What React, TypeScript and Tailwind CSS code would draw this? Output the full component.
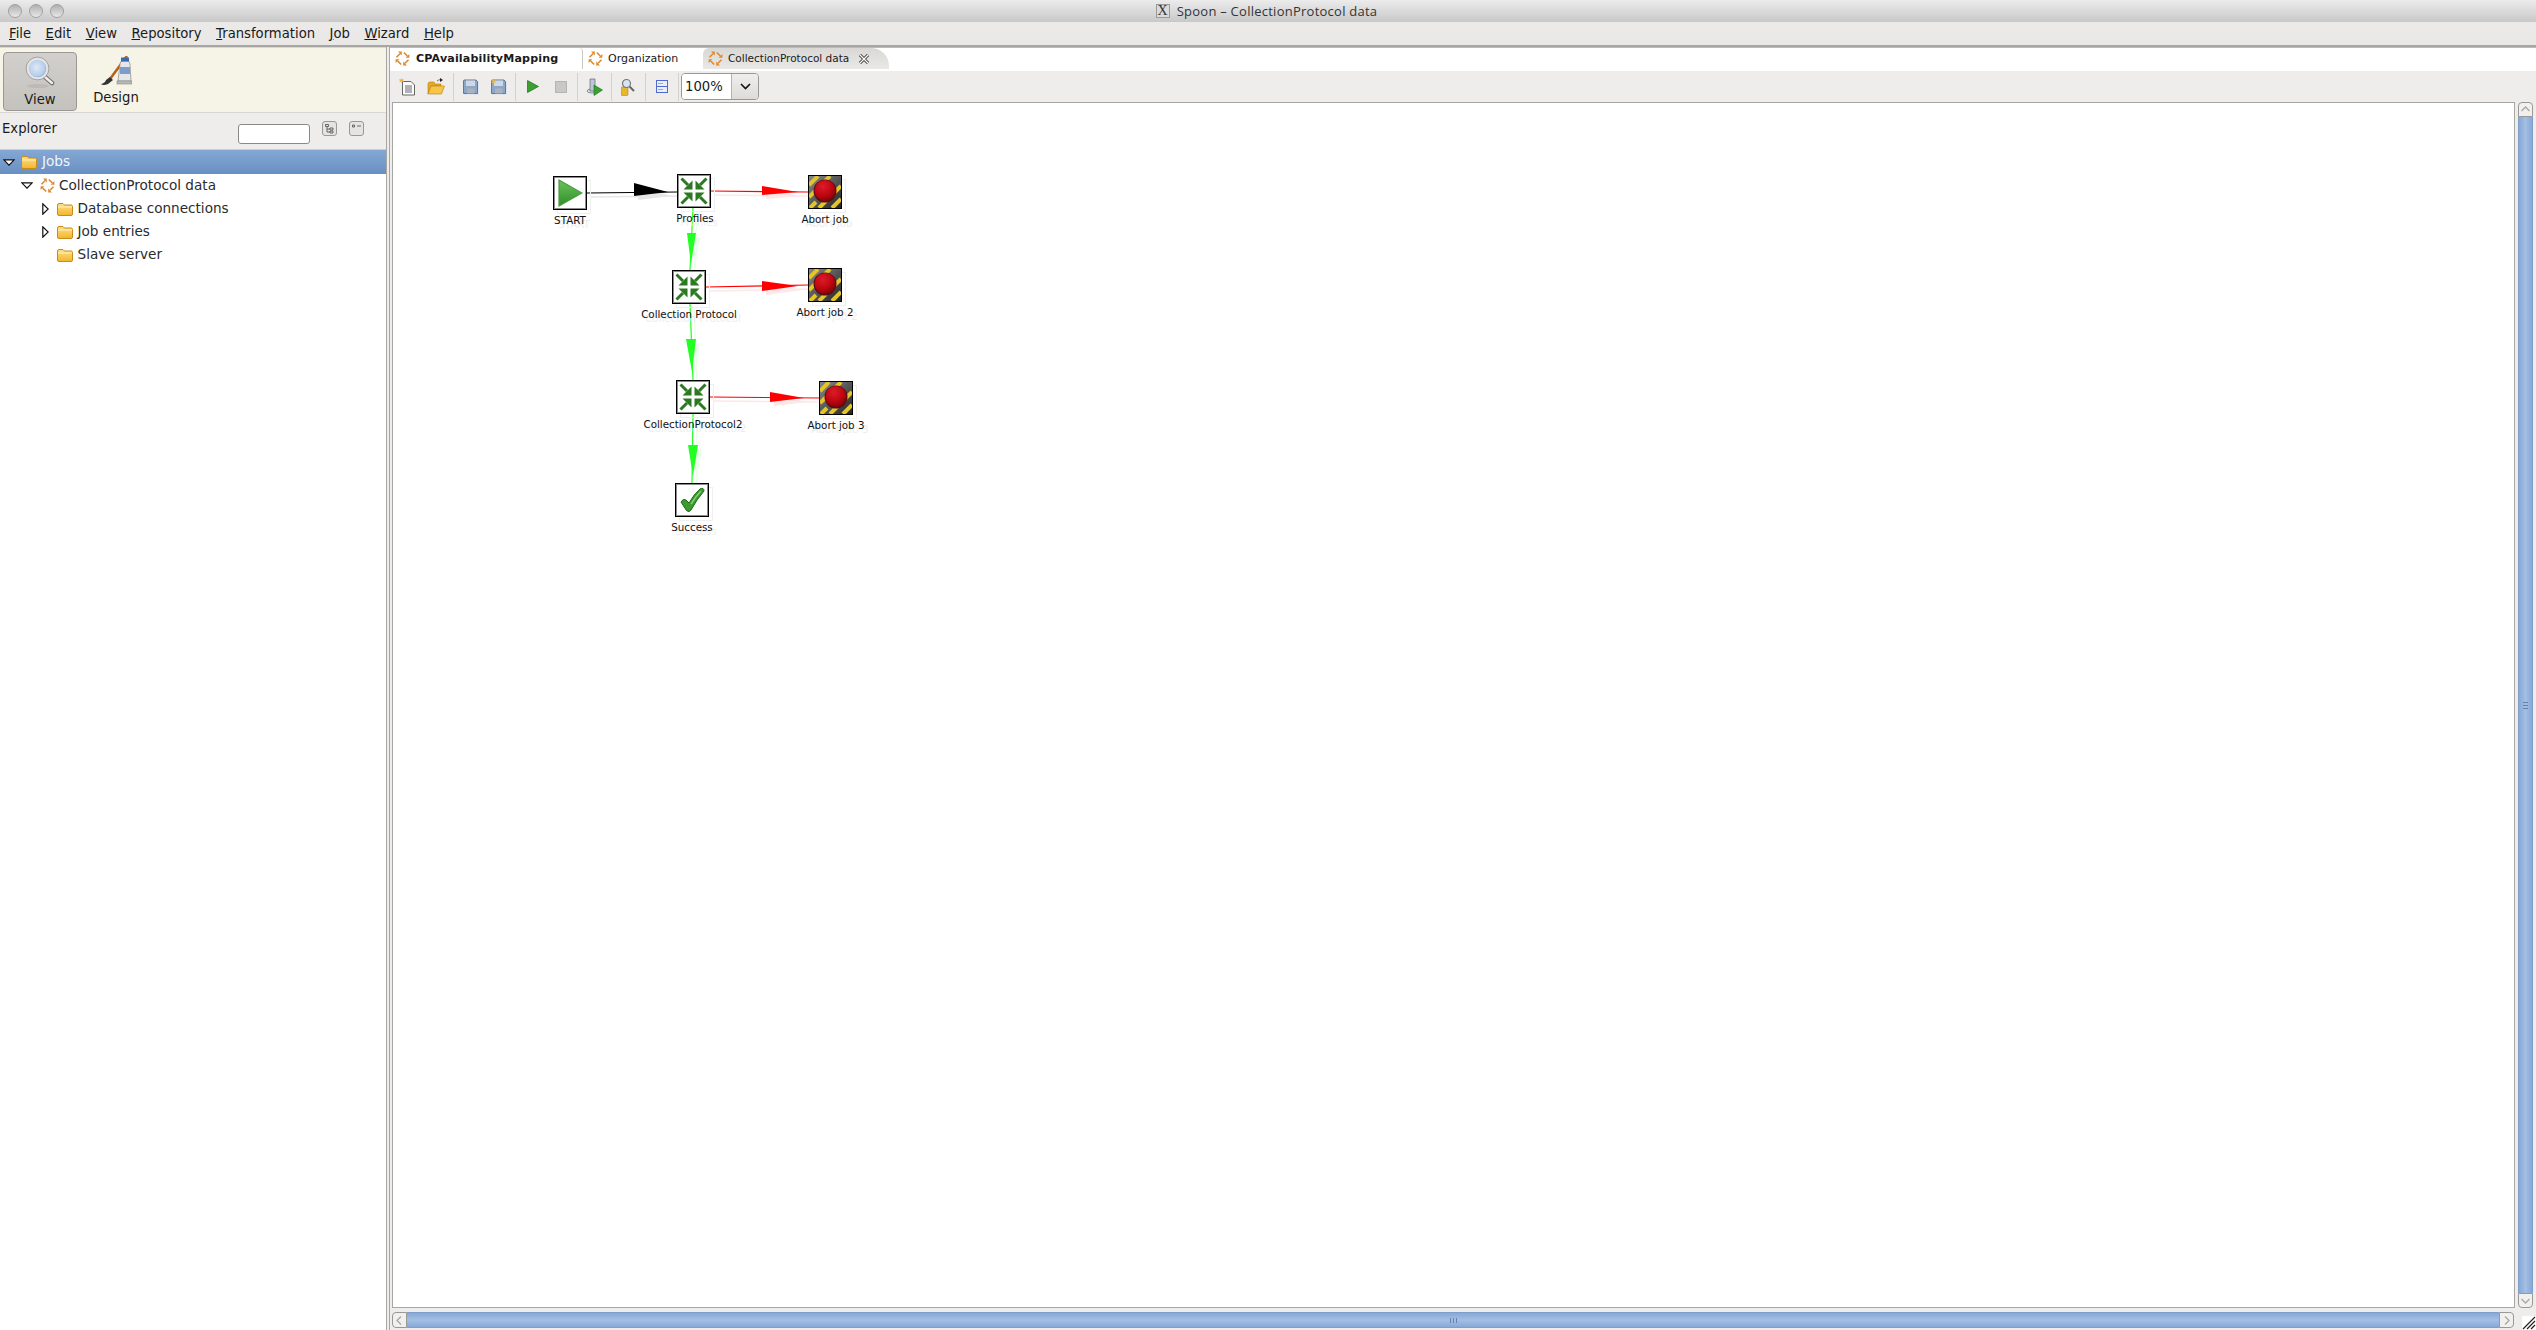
import React from "react";

const Job = ({ className = "" }: { className?: string }) => (
  <svg width="15" height="15" viewBox="0 0 15 15" className={`shrink-0 ${className}`}>
    <g stroke="#dc8a2c" strokeWidth="1.6" fill="none">
      <path d="M1.5 6.2 L5 2.7" />
      <path d="M8.8 1.5 L12.3 5" />
      <path d="M13.5 8.8 L10 12.3" />
      <path d="M6.2 13.5 L2.7 10" />
    </g>
    <g fill="#dc8a2c">
      <path d="M3 .6 H6.8 V4.4 Z" />
      <path d="M14.4 3 V6.8 H10.6 Z" />
      <path d="M12 14.4 H8.2 V10.6 Z" />
      <path d="M.6 12 V8.2 H4.4 Z" />
    </g>
  </svg>
);

const Folder = () => (
  <svg width="16" height="14" viewBox="0 0 16 14" className="shrink-0">
    <defs>
      <linearGradient id="fold" x1="0" y1="0" x2="0" y2="1">
        <stop offset="0" stopColor="#fde08a" />
        <stop offset="1" stopColor="#f3b52c" />
      </linearGradient>
    </defs>
    <path d="M.5 3 Q.5 1.5 2 1.5 H6 L7.5 3 H14 Q15.5 3 15.5 4.5 V12 Q15.5 13.5 14 13.5 H2 Q.5 13.5 .5 12 Z" fill="url(#fold)" stroke="#c98c1a" />
    <path d="M1 5 H15" stroke="#fff2c0" />
  </svg>
);

const TriDown = () => (
  <svg width="12" height="7" viewBox="0 0 12 7">
    <path d="M.8.8 H11.2 L6 6.2 Z" fill="#fff" stroke="#111" strokeWidth="1.2" />
  </svg>
);
const TriRight = () => (
  <svg width="7" height="12" viewBox="0 0 7 12">
    <path d="M.8.8 V11.2 L6.2 6 Z" fill="#fff" stroke="#111" strokeWidth="1.2" />
  </svg>
);

const Magnifier = () => (
  <svg width="30" height="33" viewBox="0 0 30 33">
    <defs>
      <radialGradient id="lens" cx=".45" cy=".45" r=".6">
        <stop offset="0" stopColor="#dfe9f6" />
        <stop offset=".7" stopColor="#b5cdea" />
        <stop offset="1" stopColor="#5d8fd0" />
      </radialGradient>
    </defs>
    <ellipse cx="13" cy="30" rx="11" ry="2" fill="#bcbab5" />
    <path d="M20 21 L27 27" stroke="#6f6f6f" strokeWidth="4.5" strokeLinecap="round" />
    <path d="M20 21 L27 27" stroke="#eeeeee" strokeWidth="2.4" strokeLinecap="round" />
    <circle cx="12.5" cy="12.5" r="10" fill="url(#lens)" stroke="#e4e4e4" strokeWidth="2.4" />
    <circle cx="12.5" cy="12.5" r="11.4" fill="none" stroke="#8a8a8a" strokeWidth=".7" />
  </svg>
);

const DesignIcon = () => (
  <svg width="32" height="30" viewBox="0 0 32 30">
    <path d="M27 0 L10 23" stroke="#b3651e" strokeWidth="2.6" />
    <path d="M10 21 L13 24 L8 28 Q3 30 1 28 Q5 27 6 24 Z" fill="#333" />
    <path d="M20 8 Q20 5 23 5 H27 Q30 5 30 8 L31 25 H18 Z" fill="#e4e6e8" stroke="#8a8a8a" strokeWidth=".7" />
    <rect x="21" y="1.5" width="8" height="4" fill="#3c68b0" />
    <rect x="20" y="11" width="10" height="7" fill="#7d9ccb" />
    <rect x="17" y="25" width="15" height="3" fill="#bbb" stroke="#777" strokeWidth=".5" />
  </svg>
);

const SmallBtn = ({ kind }: { kind: number }) => (
  <div className="w-[15px] h-[15px] rounded-[3px] border border-[#9a9895] bg-[#e6e4e1] flex items-center justify-center">
    <svg width="11" height="11" viewBox="0 0 11 11" fill="none" stroke="#666">
      {kind === 0 ? (
        <path d="M1.5 1.5 h3 v2 h-3 z M3 3.5 V9 H6 M3 6 H6 M6 5 h3 v2 h-3 z M6 8 h3 v2 h-3 z" />
      ) : (
        <path d="M1.5 2 h2 v2 h-2 z M6 3 H10" />
      )}
    </svg>
  </div>
);

const rows = [
  { indent: 21, arrow: "down", icon: "job", text: "CollectionProtocol data" },
  { indent: 42, arrow: "right", icon: "folder", text: "Database connections" },
  { indent: 42, arrow: "right", icon: "folder", text: "Job entries" },
  { indent: 42, arrow: "none", icon: "folder", text: "Slave server" },
];

const menu: [string, string][] = [
  ["F", "ile"],
  ["E", "dit"],
  ["V", "iew"],
  ["R", "epository"],
  ["T", "ransformation"],
  ["J", "ob"],
  ["W", "izard"],
  ["H", "elp"],
];

const Sep = ({ className = "" }: { className?: string }) => (
  <div className={`w-px h-[28px] bg-[#d3d1ce] ${className}`} />
);

const Cell = ({ w, children }: { w: string; children: React.ReactNode }) => (
  <div className={`${w} h-[28px] flex items-center justify-center shrink-0`}>{children}</div>
);

const NewIcon = () => (
  <svg width="18" height="18" viewBox="0 0 18 18">
    <path d="M3.5 3.5 H12 L15.5 7 V17 H3.5 Z" fill="#fbfbfb" stroke="#666" />
    <path d="M6 8 H13 M6 10 H13 M6 12 H13 M6 14 H13" stroke="#667" />
    <path d="M2.5 0 L3.3 1.5 L5 1 L4 2.5 L5 4 L3.3 3.6 L2.5 5 L1.7 3.6 L0 4 L1 2.5 L0 1 L1.7 1.5 Z" fill="#f2b632" />
  </svg>
);
const OpenIcon = () => (
  <svg width="18" height="17" viewBox="0 0 18 17">
    <path d="M1 6 Q1 4 3 4 H7 L8 6 H14 V8 H4 L1 16 Z" fill="#e8a824" stroke="#b57f17" strokeWidth=".6" />
    <path d="M1 16 L4 8 H17.5 L14.5 16 Z" fill="#f6c546" stroke="#b57f17" strokeWidth=".6" />
    <path d="M10 3 Q12 1 14 2" stroke="#777" fill="none" />
    <path d="M13 0 L16 2 L13 4 Z" fill="#222" />
  </svg>
);
const SaveIcon = ({ star }: { star?: boolean }) => (
  <svg width="16" height="16" viewBox="0 0 16 16">
    <rect x="1" y="2" width="15" height="14" fill="#dfe5ee" />
    <path d="M.5 2 Q.5 1 1.5 1 H13 L14.5 2.5 V14.5 H.5 Z" fill="#8fa7c6" stroke="#67788f" />
    <rect x="3" y="1.5" width="9" height="5.5" fill="#cfd9e6" />
    <rect x="4" y="9.5" width="7.5" height="5" fill="#aab2bd" />
    {star && <path d="M2.5 0 L3.3 1.5 L5 1 L4 2.5 L5 4 L3.3 3.6 L2.5 5 L1.7 3.6 L0 4 L1 2.5 L0 1 L1.7 1.5 Z" fill="#f2b632" />}
  </svg>
);
const RunIcon = ({ size = 12 }: { size?: number }) => (
  <svg width={size} height={size + 1} viewBox="0 0 12 13">
    <path d="M.5.5 L11.5 6.5 L.5 12.5 Z" fill="#3aa02f" stroke="#1d6b1a" strokeWidth=".7" />
  </svg>
);
const StopIcon = () => <div className="w-[12px] h-[12px] bg-[#c9c8c5] border border-[#b5b4b1]" />;
const RunOptIcon = () => (
  <svg width="17" height="19" viewBox="0 0 17 19">
    <ellipse cx="6" cy="14" rx="5" ry="2" fill="#d5dbe4" stroke="#667" strokeWidth=".7" />
    <path d="M4 2 H9 V14 H4 Z" fill="#bcc6d6" stroke="#667" strokeWidth=".7" />
    <path d="M8 8 L16.5 13 L8 18.5 Z" fill="#3aa02f" stroke="#1d6b1a" strokeWidth=".6" />
  </svg>
);
const FindIcon = () => (
  <svg width="14" height="18" viewBox="0 0 14 18">
    <rect x="0" y="9" width="7" height="8.5" rx="1" fill="#e6b62c" stroke="#a97f12" strokeWidth=".5" />
    <path d="M8 8 L13 13" stroke="#666" strokeWidth="2" />
    <circle cx="5.5" cy="5.5" r="4" fill="#d6e4f3" stroke="#777" strokeWidth="1.2" />
  </svg>
);
const LayersIcon = () => (
  <svg width="12" height="13" viewBox="0 0 12 13">
    <rect x=".5" y=".5" width="11" height="12" fill="#e9eefa" stroke="#4d6bd0" />
    <path d="M0 6.5 H12" stroke="#4d6bd0" />
    <path d="M2 3.5 H7 M2 9.5 H7" stroke="#d9a93a" />
  </svg>
);

const ChevronThin = ({ d }: { d: string }) => (
  <svg width="11" height="11" viewBox="0 0 11 11" fill="none" stroke="#a9a7a4" strokeWidth="1.3">
    <path d={d} />
  </svg>
);

const OX = 393;
const OY = 103;

const Merge = () => (
  <svg width="28" height="28" viewBox="0 0 28 28">
    <g stroke="#2b7a22" strokeWidth="3" fill="none">
      <path d="M1.5 1.5 L8 8" />
      <path d="M26.5 1.5 L20 8" />
      <path d="M1.5 26.5 L8 20" />
      <path d="M26.5 26.5 L20 20" />
    </g>
    <g fill="#2b7a22">
      <path d="M12.5 12.5 V3.5 L3.5 12.5 Z" />
      <path d="M15.5 12.5 V3.5 L24.5 12.5 Z" />
      <path d="M12.5 15.5 V24.5 L3.5 15.5 Z" />
      <path d="M15.5 15.5 V24.5 L24.5 15.5 Z" />
    </g>
  </svg>
);

const Start = () => (
  <svg width="26" height="28" viewBox="0 0 26 28">
    <defs>
      <linearGradient id="startg" x1="0" y1="0" x2="0" y2="1">
        <stop offset="0" stopColor="#6cc25c" />
        <stop offset="1" stopColor="#2f8f28" />
      </linearGradient>
    </defs>
    <path d="M2 1 L25 14 L2 27 Z" fill="url(#startg)" stroke="#4c9a42" strokeWidth="1.2" />
  </svg>
);

const Check = () => (
  <svg width="26" height="26" viewBox="0 0 26 26">
    <path d="M2 15 Q4 11 7 13 L10 16 Q15 7 21 2 Q25 0 25 4 Q18 12 12 23 Q10 26 7.5 23.5 Z" fill="#3c9a2e" stroke="#1f6a1a" strokeWidth="1" />
    <path d="M12 17 Q17 9 22 4" stroke="#7fd06c" strokeWidth="1.6" fill="none" />
  </svg>
);

const Abort = () => (
  <svg width="34" height="34" viewBox="0 0 34 34" className="block">
    <defs>
      <radialGradient id="red" cx=".4" cy=".3" r=".75">
        <stop offset="0" stopColor="#dc1c28" />
        <stop offset=".6" stopColor="#bd0610" />
        <stop offset="1" stopColor="#7c0308" />
      </radialGradient>
      <linearGradient id="plate" x1="0" y1="0" x2="1" y2="1">
        <stop offset="0" stopColor="#8a8a8a" />
        <stop offset="1" stopColor="#222" />
      </linearGradient>
    </defs>
    <rect width="34" height="34" fill="url(#plate)" />
    <g stroke="#e2c52a" strokeWidth="4">
      <path d="M1 10 L10 1" />
      <path d="M1 22 L22 1" />
      <path d="M24 33 L33 24" />
      <path d="M11 33 L33 11" />
      <path d="M2 33 L8 27" />
    </g>
    <rect x=".5" y=".5" width="33" height="33" fill="none" stroke="#000" />
    <circle cx="17" cy="16" r="11.5" fill="#5b0d10" />
    <circle cx="17" cy="15.5" r="10.5" fill="url(#red)" />
  </svg>
);

type N = { x: number; y: number; cx: number; ly: number; label: string; kind: string };
const nodes: N[] = [
  { x: 553, y: 176, cx: 570, ly: 220, label: "START", kind: "start" },
  { x: 677, y: 174, cx: 695, ly: 218, label: "Profiles", kind: "merge" },
  { x: 808, y: 175, cx: 825, ly: 219, label: "Abort job", kind: "abort" },
  { x: 672, y: 270, cx: 689, ly: 314, label: "Collection Protocol", kind: "merge" },
  { x: 808, y: 268, cx: 825, ly: 312, label: "Abort job 2", kind: "abort" },
  { x: 676, y: 380, cx: 693, ly: 424, label: "CollectionProtocol2", kind: "merge" },
  { x: 819, y: 381, cx: 836, ly: 425, label: "Abort job 3", kind: "abort" },
  { x: 675, y: 483, cx: 692, ly: 527, label: "Success", kind: "check" },
];

type E = { a: [number, number]; b: [number, number]; tri: string; c: string };
const edges: E[] = [
  { a: [587, 193], b: [677, 192], tri: "634,183 634,196 668,192", c: "#000000" },
  { a: [711, 191], b: [808, 192], tri: "762,186 762,195 798,192", c: "#ff0000" },
  { a: [706, 287], b: [808, 285], tri: "762,281 762,291 798,286", c: "#ff0000" },
  { a: [710, 397], b: [819, 398], tri: "770,392 770,402 804,398", c: "#ff0000" },
  { a: [693, 208], b: [690, 270], tri: "687,233 696,233 691,264", c: "#22ff22" },
  { a: [690, 304], b: [693, 380], tri: "686,339 696,339 692,372", c: "#22ff22" },
  { a: [693, 414], b: [692, 483], tri: "688,445 698,445 693,476", c: "#22ff22" },
];

function NodeView({ n }: { n: N }) {
  return (
    <>
      <div
        className="absolute w-[34px] h-[34px] border border-[#efefef]"
        style={{ left: n.x - OX + 4, top: n.y - OY + 4 }}
      />
      <div
        className="absolute -translate-x-1/2 -translate-y-1/2 whitespace-nowrap text-[10.3px] leading-none text-[#ededed]"
        style={{ left: n.cx - OX + 4, top: n.ly - OY + 4 }}
      >
        {n.label}
      </div>
      <div
        className={`absolute w-[34px] h-[34px] flex items-center justify-center ${n.kind === "abort" ? "" : "bg-white border border-black shadow-[inset_0_0_0_1px_rgba(0,0,0,0.45)]"}`}
        style={{ left: n.x - OX, top: n.y - OY }}
      >
        {n.kind === "merge" && <Merge />}
        {n.kind === "start" && <Start />}
        {n.kind === "abort" && <Abort />}
        {n.kind === "check" && <Check />}
      </div>
      <div
        className="absolute -translate-x-1/2 -translate-y-1/2 whitespace-nowrap text-[10.3px] leading-none text-[#111]"
        style={{ left: n.cx - OX, top: n.ly - OY }}
      >
        {n.label}
      </div>
    </>
  );
}

export default function App() {
  return (
    <div className="w-[2536px] h-[1330px] overflow-hidden flex flex-col bg-[#eeedeb] text-[#1a1a1a] font-['DejaVu_Sans',sans-serif]">
      {/* title bar */}
      <div className="relative h-[22px] shrink-0 flex items-center justify-center bg-gradient-to-b from-[#ececec] to-[#c8c8c8]">
        <div className="absolute left-[8px] top-[4px] flex gap-[7px]">
          {[0, 1, 2].map((i) => (
            <div key={i} className="w-[14px] h-[14px] rounded-full border border-[#a0a0a0] bg-gradient-to-b from-[#b0b0b0] to-[#e8e8e8]" />
          ))}
        </div>
        <div className="flex items-center gap-[7px] pr-[3px]">
          <div className="w-[14px] h-[14px] bg-[#dadada] border border-[#9a9a9a] flex items-center justify-center font-['Liberation_Serif',serif] text-[14px] leading-none text-[#333]">
            X
          </div>
          <span className="text-[13px] leading-none text-[#333] font-['Open_Sans',sans-serif] tracking-[0.25px]">Spoon – CollectionProtocol data</span>
        </div>
      </div>
      {/* menu */}
      <div className="h-[25px] shrink-0 flex items-center pl-[9px] gap-[14.5px] text-[13.2px] bg-gradient-to-b from-[#ebeae8] to-[#e9e8e6] border-b-2 border-[#a8a6a3]">
        {menu.map(([a, b]) => (
          <span key={a} className="leading-none">
            <span className="underline">{a}</span>
            {b}
          </span>
        ))}
      </div>
      {/* main */}
      <div className="flex flex-1 min-h-0">
        {/* left */}
        <div className="w-[387px] shrink-0 flex flex-col bg-white border-r border-[#a8a6a3]">
          <div className="h-[66px] shrink-0 flex items-start pt-[4px] pl-[3px] bg-[#f6f4e7] border-b border-t border-[#d9d7d3]">
            <div className="w-[74px] h-[59px] rounded-[4px] border border-[#9a9895] bg-gradient-to-b from-[#d2d0cc] to-[#c4c2bd] flex flex-col items-center pt-[3px] text-[13.2px] leading-none">
              <Magnifier />
              <span className="mt-[4px]">View</span>
            </div>
            <div className="w-[78px] h-[59px] flex flex-col items-center pt-[4px] text-[13.2px] leading-none">
              <DesignIcon />
              <span className="mt-[5px]">Design</span>
            </div>
          </div>
          <div className="h-[37px] shrink-0 flex items-start bg-[#eeedeb] border-b border-[#d0cecb] pl-[2px] relative">
            <span className="text-[13.2px] leading-none mt-[9px]">Explorer</span>
            <div className="ml-auto mr-[22px] mt-[8px] flex items-start gap-[12px]">
              <div className="w-[72px] h-[20px] bg-white border border-[#8b8986] rounded-[3px] mt-[3px]" />
              <SmallBtn kind={0} />
              <SmallBtn kind={1} />
            </div>
          </div>
          <div className="h-[24px] shrink-0 flex items-center bg-gradient-to-b from-[#84a8d4] to-[#6890c2] text-[#f2f5fa] text-[13.6px]">
            <span className="ml-[3px] w-[18px] flex">
              <TriDown />
            </span>
            <Folder />
            <span className="ml-[5px] leading-none">Jobs</span>
          </div>
          {rows.map((r) => (
            <div key={r.text} className="h-[23px] shrink-0 flex items-center text-[13.6px] text-[#2b2b2b]">
              {r.indent === 21 ? (
                <span className="ml-[21px] w-[19px] flex">
                  <TriDown />
                </span>
              ) : (
                <span className="ml-[42px] w-[15px] flex">{r.arrow === "right" && <TriRight />}</span>
              )}
              {r.icon === "job" ? <Job /> : <Folder />}
              <span className={`${r.icon === "job" ? "ml-[4px]" : "ml-[4.5px]"} leading-none whitespace-nowrap`}>{r.text}</span>
            </div>
          ))}
        </div>
        {/* right */}
        <div className="ml-[2px] flex-1 min-w-0 flex flex-col border-l border-[#a8a6a3] relative">
          {/* tabs */}
          <div className="h-[22px] shrink-0 flex items-stretch bg-white border-t border-[#bdbbb8]">
            <div className="w-[193px] flex items-center pl-[5px] border-r border-[#c9c7c4] rounded-tr-[4px]">
              <Job />
              <span className="ml-[6px] text-[11.1px] font-bold tracking-[0.15px] leading-none whitespace-nowrap">CPAvailabilityMapping</span>
            </div>
            <div className="w-[120px] flex items-center pl-[5px] rounded-tl-[6px]">
              <Job />
              <span className="ml-[5px] text-[11px] leading-none">Organization</span>
            </div>
            <div className="w-[186px] flex items-center pl-[5px] bg-gradient-to-b from-[#dad8d5] to-[#e9e8e6] rounded-tl-[6px] rounded-tr-[18px]">
              <Job />
              <span className="ml-[5px] text-[10.5px] leading-none whitespace-nowrap">CollectionProtocol data</span>
              <svg width="12" height="12" viewBox="0 0 12 12" className="ml-[9px] shrink-0">
                <path d="M2 2 L10 10 M10 2 L2 10" stroke="#222" strokeWidth="3" />
                <path d="M2 2 L10 10 M10 2 L2 10" stroke="#fff" strokeWidth="1.4" />
              </svg>
            </div>
          </div>
          {/* toolbar */}
          <div className="h-[33px] shrink-0 flex items-center pl-[4px] bg-[#eeedeb] border-t-2 border-white">
            <Cell w="w-[28px]"><NewIcon /></Cell>
            <Cell w="w-[28px]"><OpenIcon /></Cell>
            <Sep className="mx-[3px]" />
            <Cell w="w-[28px]"><SaveIcon /></Cell>
            <Cell w="w-[27px]"><SaveIcon star /></Cell>
            <Sep className="mx-[3px]" />
            <Cell w="w-[28px]"><RunIcon /></Cell>
            <Cell w="w-[27px]"><StopIcon /></Cell>
            <Sep className="mx-[3px]" />
            <Cell w="w-[26px]"><RunOptIcon /></Cell>
            <Sep className="ml-[4px] mr-[3px]" />
            <Cell w="w-[26px]"><FindIcon /></Cell>
            <Sep className="ml-[4px] mr-[3px]" />
            <Cell w="w-[26px]"><LayersIcon /></Cell>
            <Sep className="ml-[3px] mr-[2px]" />
            <div className="w-[78px] h-[27px] rounded-[4px] border border-[#9a9895] flex overflow-hidden">
              <div className="w-[50px] bg-white border-r border-[#b5b3b0] flex items-center pl-[3px] text-[13.2px] leading-none">100%</div>
              <div className="flex-1 bg-gradient-to-b from-[#efeeec] to-[#dedcd9] flex items-center justify-center">
                <svg width="11" height="7" viewBox="0 0 11 7" fill="none" stroke="#111" strokeWidth="1.6">
                  <path d="M1 1 L5.5 5.5 L10 1" />
                </svg>
              </div>
            </div>
          </div>
          {/* canvas + vertical scroll */}
          <div className="flex-1 min-h-0 flex pl-[2px]">
            <div className="relative w-[2123px] h-[1206px] shrink-0 bg-white border border-[#a8a6a3] overflow-hidden">
              <svg className="absolute left-0 top-0 w-full h-full" viewBox={`${OX} ${OY} 2121 1204`}>
                <g opacity="0.09" transform="translate(4 4)">
                  {edges.map((e, i) => (
                    <g key={i}>
                      <line x1={e.a[0]} y1={e.a[1]} x2={e.b[0]} y2={e.b[1]} stroke={e.c} strokeWidth="1.4" />
                      <polygon points={e.tri} fill={e.c} />
                    </g>
                  ))}
                </g>
                {edges.map((e, i) => (
                  <g key={i}>
                    <line x1={e.a[0]} y1={e.a[1]} x2={e.b[0]} y2={e.b[1]} stroke={e.c} strokeWidth="1.2" />
                    <polygon points={e.tri} fill={e.c} />
                  </g>
                ))}
              </svg>
              {nodes.map((n) => (
                <NodeView key={n.label} n={n} />
              ))}
            </div>
            <div className="ml-[3px] w-[15px] h-[1206px] shrink-0 flex flex-col">
              <div className="h-[15px] shrink-0 rounded-t-[4px] border border-[#9a9895] bg-[#f1f0ee] flex items-center justify-center">
                <ChevronThin d="M1.5 7 L5.5 3 L9.5 7" />
              </div>
              <div className="flex-1 border-x border-[#7f9fca] bg-gradient-to-r from-[#87a9d7] via-[#a3bfe3] to-[#87a9d7] flex items-center justify-center">
                <div className="w-[5px] h-[7px] border-y border-[#5f83b3] relative">
                  <div className="h-px mt-[2px] bg-[#5f83b3]" />
                </div>
              </div>
              <div className="h-[15px] shrink-0 rounded-b-[4px] border border-[#9a9895] bg-[#f1f0ee] flex items-center justify-center">
                <ChevronThin d="M1.5 4 L5.5 8 L9.5 4" />
              </div>
            </div>
          </div>
          {/* horizontal scroll */}
          <div className="h-[16px] shrink-0 mb-[2px] pl-[2px] flex">
            <div className="w-[2122px] h-[16px] flex shrink-0">
              <div className="w-[15px] h-full shrink-0 rounded-l-[4px] border border-[#9a9895] bg-[#f1f0ee] flex items-center justify-center">
                <ChevronThin d="M7 1.5 L3 5.5 L7 9.5" />
              </div>
              <div className="flex-1 border-y border-[#7f9fca] bg-gradient-to-b from-[#87a9d7] via-[#a3bfe3] to-[#87a9d7] flex items-center justify-center">
                <div className="w-[7px] h-[5px] border-x border-[#5f83b3] flex justify-center">
                  <div className="w-px bg-[#5f83b3]" />
                </div>
              </div>
              <div className="w-[15px] h-full shrink-0 rounded-r-[4px] border border-[#9a9895] bg-[#f1f0ee] flex items-center justify-center">
                <ChevronThin d="M4 1.5 L8 5.5 L4 9.5" />
              </div>
            </div>
          </div>
          {/* resize grip */}
          <div className="absolute right-0 bottom-0 w-[14px] h-[14px] bg-white">
            <svg width="14" height="14" viewBox="0 0 14 14" stroke="#222" strokeWidth="1.2">
              <path d="M1 13 L13 1 M5 13 L13 5 M9 13 L13 9" />
            </svg>
          </div>
        </div>
      </div>
    </div>
  );
}
